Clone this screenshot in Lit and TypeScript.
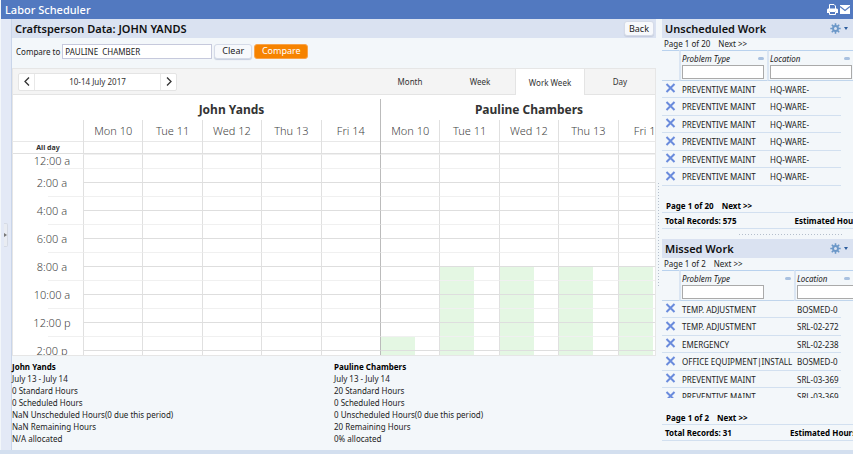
import { LitElement, html, css } from "lit";
import { customElement, property } from "lit/decorators.js";
import { classMap } from "lit/directives/class-map.js";

const DAYS = ["Mon 10", "Tue 11", "Wed 12", "Thu 13", "Fri 14"];
const PEOPLE = ["John Yands", "Pauline Chambers"];
const HOURS = Array.from({ length: 15 }, (_, h) => h);
// First shaded hour for each of the ten day columns; 99 means none.
const FREE_FROM = [99, 99, 99, 99, 99, 13, 8, 8, 8, 8];

const hourLabel = (h: number) => `${h % 12 || 12}:00 ${h < 12 ? "a" : "p"}`;

@customElement("work-panel")
class WorkPanel extends LitElement {
  @property() heading = "";
  @property({ type: Number }) pages = 1;
  @property({ type: Number }) total = 0;
  @property({ attribute: false }) rows: string[][] = [];
  @property({ type: Boolean, reflect: true }) wide = false;

  static styles = css`
    :host { display: block; overflow: hidden; min-width: 0; }
    .title { display: flex; align-items: center; height: 19px; padding: 0 5px 0 3px; background: #dae2f1; }
    h2 { flex: 1; margin: 0; font-size: 11px; line-height: 19px; font-weight: 600; color: #111; white-space: nowrap; }
    button { display: flex; align-items: center; gap: 3px; padding: 0; border: 0; background: none; }
    .pager { display: flex; gap: 8px; height: 12px; padding: 0 2px; line-height: 12px; font-size: 8px; white-space: nowrap; }
    a { color: inherit; text-decoration: none; }
    .scroll { overflow: hidden; max-height: 136px; }
    :host([wide]) .scroll { max-height: 128px; }
    table { width: 100%; table-layout: fixed; border-collapse: separate; border-spacing: 0; font-size: 8px; color: #222; }
    .c-x { width: 17px; }
    .c-type { width: 88px; }
    .c-loc { width: 74px; }
    :host([wide]) .c-type { width: 115px; }
    :host([wide]) .c-loc { width: 47px; }
    th, td { padding: 0; text-align: left; font-weight: 400; white-space: nowrap; box-sizing: border-box; }
    th { height: 31px; border-top: 1px solid #b9d2ee; border-bottom: 1px solid #c0d5ec; vertical-align: top; }
    th + th { border-left: 2px solid #dbe6f3; padding-left: 1px; }
    .label { display: flex; align-items: center; justify-content: space-between; height: 14px; padding-right: 3px; font-style: italic; }
    .label i { width: 6px; height: 3px; border-radius: 2px; background: #a9c1e0; }
    input { display: block; box-sizing: border-box; width: 82px; height: 14px; padding: 0 2px; border: 1px solid #aaa; background: #fff; font-size: 8px; }
    td { height: 17px; border-bottom: 1px solid #d2e0f0; }
    tr:nth-child(even) td { height: 18px; }
    td.end { border-bottom: 0; }
    td + td { padding-left: 3px; }
    td svg { display: block; margin: 0 0 2px 3px; }
    .foot { padding-top: 13px; font-weight: 700; color: #000; font-size: 8px; white-space: nowrap; }
    .foot .pager { height: 13px; line-height: 14px; padding: 0 4px; }
    .totals { display: flex; gap: 58px; height: 15px; padding-left: 3px; line-height: 15px; border: solid #d2e0f0; border-width: 1px 0; }
    .totals span { flex: none; }
  `;

  private pager() {
    return html`<nav class="pager"><span>Page 1 of ${this.pages}</span><a href="#next">Next &gt;&gt;</a></nav>`;
  }

  render() {
    return html`
      <header class="title">
        <h2>${this.heading}</h2>
        <button aria-label="Options">
          <svg width="11" height="11" viewBox="0 0 11 11">
            <g stroke="#6c98c8" stroke-width="1.600">
              <path d="M5.500 .3v10.400M.3 5.500h10.400M1.800 1.800l7.400 7.400M9.200 1.800l-7.400 7.400" />
            </g>
            <circle cx="5.500" cy="5.500" r="3.400" fill="#6c98c8" />
            <circle cx="5.500" cy="5.500" r="1.500" fill="#dae2f1" />
          </svg>
          <svg width="4" height="3" viewBox="0 0 4 3"><path d="M0 0h4L2 3z" fill="#2d5e9e" /></svg>
        </button>
      </header>
      ${this.pager()}
      <div class="scroll">
        <table>
          <colgroup><col class="c-x" /><col class="c-type" /><col class="c-loc" /><col /></colgroup>
          <thead>
            <tr>
              <th></th>
              ${["Problem Type", "Location"].map(
                (name, i) => html`<th colspan=${i + 1}>
                  <div class="label"><span>${name}</span><i></i></div>
                  <input type="text" aria-label=${name} />
                </th>`
              )}
            </tr>
          </thead>
          <tbody>
            ${this.rows.map(
              ([type, place]) => html`<tr>
                <td>
                  <svg width="11" height="10" viewBox="0 0 11 10">
                    <path d="M1.500 1l8 8M9.500 1l-8 8" stroke="#6a8bdc" stroke-width="2" />
                  </svg>
                </td>
                <td>${type}</td>
                <td>${place}</td>
                <td class="end"></td>
              </tr>`
            )}
          </tbody>
        </table>
      </div>
      <footer class="foot">
        ${this.pager()}
        <div class="totals"><span>Total Records: ${this.total}</span><span>Estimated Hours</span></div>
      </footer>
    `;
  }
}

@customElement("work-calendar")
class WorkCalendar extends LitElement {
  static styles = css`
    :host { display: flex; flex-direction: column; min-height: 0; background: #fff; border: 1px solid #e6e6e6; box-sizing: border-box; color: #333; overflow: hidden; }
    .bar { display: flex; flex: none; align-items: stretch; justify-content: space-between; height: 25px; background: #f4f4f4; border-bottom: 1px solid #e4e4e4; }
    button { padding: 0; border: 0; background: none; font: inherit; color: inherit; }
    .range { display: flex; align-self: center; height: 16px; margin-left: 5px; border: 1px solid #e4e4e4; border-radius: 2px; background: #fff; font-size: 8px; }
    .range button { display: grid; place-items: center; width: 15px; }
    .range .date { width: 127px; border: solid #e8e8e8; border-width: 0 1px; line-height: 16px; }
    .tabs { display: flex; height: 25px; font-size: 8px; }
    .tabs button { width: 70px; box-sizing: border-box; }
    .tabs .on { height: 26px; background: #fff; border: solid #e4e4e4; border-width: 0 1px; }
    .sheet { flex: 1; min-height: 0; margin-right: -22px; overflow: hidden; }
    .row { display: grid; grid-template-columns: 70px repeat(10, 1fr); }
    .people { display: grid; grid-template-columns: 70px 1fr 1fr; height: 21px; margin-top: 4px; line-height: 21px; font-size: 12px; font-weight: 700; text-align: center; }
    .people .second, .row .second { border-left: 1px solid #bbb; }
    .days { height: 21px; line-height: 22px; font-size: 11px; font-weight: 300; text-align: center; color: #444; border-bottom: 1px solid #e8e8e8; }
    .cell { border-left: 1px solid #e0e0e0; }
    .allday { height: 11px; border-bottom: 1px solid #e0e0e0; line-height: 12px; font-size: 7px; font-weight: 700; }
    .allday .time { text-align: center; }
    .slot { height: 14px; }
    .slot .time { box-sizing: border-box; text-align: center; padding-left: 8px; font-size: 11px; line-height: 14px; font-weight: 300; color: #444; white-space: nowrap; }
    .slot .time.odd { margin-left: 35px; border-top: 1px solid #f0f0f0; }
    .slot .time span { display: block; margin-top: -6px; }
    .slot:first-child .time span { margin-top: 0; }
    .slot .cell { border-top: 1px solid #dedede; }
    .slot .cell.half { border-top-color: #f0f0f0; }
    .slot:first-child .cell { border-top-color: #f0f0f0; }
    .cell.free { background: linear-gradient(to right, #e4f7e3 58%, transparent 58%); }
  `;

  render() {
    const columns = FREE_FROM.map((_, i) => i);
    return html`
      <div class="bar">
        <div class="range">
          <button aria-label="Previous">
            <svg width="6" height="9" viewBox="0 0 6 9"><path d="M5 .5l-4 4 4 4" fill="none" stroke="#333" stroke-width="1.300" /></svg>
          </button>
          <button class="date">10-14 July 2017</button>
          <button aria-label="Next">
            <svg width="6" height="9" viewBox="0 0 6 9"><path d="M1 .5l4 4-4 4" fill="none" stroke="#333" stroke-width="1.300" /></svg>
          </button>
        </div>
        <div class="tabs">
          ${["Month", "Week", "Work Week", "Day"].map(
            (t) => html`<button class=${classMap({ on: t === "Work Week" })}>${t}</button>`
          )}
        </div>
      </div>
      <div class="sheet">
        <div class="people">
          <span></span>
          ${PEOPLE.map((p, i) => html`<span class=${classMap({ second: i === 1 })}>${p}</span>`)}
        </div>
        <div class="row days">
          <span></span>
          ${columns.map((i) => html`<span class=${classMap({ cell: true, second: i === 5 })}>${DAYS[i % 5]}</span>`)}
        </div>
        <div class="row allday">
          <span class="time">All day</span>
          ${columns.map((i) => html`<span class=${classMap({ cell: true, second: i === 5 })}></span>`)}
        </div>
        <div>
          ${HOURS.map(
            (h) => html`<div class="row slot">
              <div class=${classMap({ time: true, odd: h % 2 === 1 })}>${h % 2 ? "" : html`<span>${hourLabel(h)}</span>`}</div>
              ${columns.map(
                (i) => html`<div
                  class=${classMap({ cell: true, half: h % 2 === 1, second: i === 5, free: h >= FREE_FROM[i] })}
                ></div>`
              )}
            </div>`
          )}
        </div>
      </div>
    `;
  }
}

const SUMMARY = [
  ["John Yands", "July 13 - July 14", "0 Standard Hours", "0 Scheduled Hours", "NaN Unscheduled Hours(0 due this period)", "NaN Remaining Hours", "N/A allocated"],
  ["Pauline Chambers", "July 13 - July 14", "20 Standard Hours", "0 Scheduled Hours", "0 Unscheduled Hours(0 due this period)", "20 Remaining Hours", "0% allocated"],
];

const UNSCHEDULED = Array.from({ length: 6 }, () => ["PREVENTIVE MAINT", "HQ-WARE-"]);
const MISSED = [
  ["TEMP. ADJUSTMENT", "BOSMED-0"],
  ["TEMP. ADJUSTMENT", "SRL-02-272"],
  ["EMERGENCY", "SRL-02-238"],
  ["OFFICE EQUIPMENT|INSTALL", "BOSMED-0"],
  ["PREVENTIVE MAINT", "SRL-03-369"],
  ["PREVENTIVE MAINT", "SRL-03-369"],
];

@customElement("app-root")
class AppRoot extends LitElement {
  static styles = css`
    :host { display: flex; flex-direction: column; box-sizing: border-box; height: 100vh; overflow: hidden; padding-left: 1px; background: #f3f7fa; font-family: "Noto Sans", "Open Sans", sans-serif; font-size: 8px; color: #222; border-bottom: 4px solid #d3dfef; }
    .top { display: flex; flex: none; align-items: center; gap: 2px; height: 19px; padding: 0 3px 0 4px; background: #5279c0; color: #fff; }
    h1 { flex: 1; margin: 0; font-size: 11px; font-weight: 500; line-height: 18px; }
    .top button { display: flex; padding: 0; border: 0; background: none; }
    .body { flex: 1; min-height: 0; display: grid; grid-template-columns: 11px minmax(0, 1fr) 6px 191px; }
    .rail { display: flex; align-items: center; justify-content: flex-end; box-sizing: border-box; background: #e3e9f6; border-right: 1px solid #c9d5ea; }
    .rail button { display: grid; place-items: center; width: 4px; height: 24px; margin-right: 3px; padding: 0; border: 1px solid #d5dae4; border-left: 0; border-radius: 0 2px 2px 0; background: #e9ecf2; box-sizing: border-box; }
    .main { display: flex; flex-direction: column; min-height: 0; }
    .title { display: flex; flex: none; align-items: center; height: 19px; padding: 0 2px 0 3px; background: #dae2f1; }
    h2 { flex: 1; margin: 0; font-size: 11px; font-weight: 600; color: #111; line-height: 19px; }
    .btn { box-sizing: border-box; height: 15px; padding: 0 4px; border: 1px solid #d5dbe8; border-radius: 3px; background: #f7f9fc; box-shadow: 0 1px 1px #c5cddd; font: inherit; font-size: 9px; line-height: 12px; color: #222; }
    .compare { display: flex; flex: none; align-items: center; height: 30px; padding: 0 4px 4px; gap: 2px; box-sizing: border-box; }
    .compare .btn { min-width: 38px; }
    .compare .go { min-width: 54px; background: #f68300; border-color: #f9a34a; color: #fff; box-shadow: none; }
    input { box-sizing: border-box; width: 150px; height: 15px; padding: 0 2px; border: 1px solid #c6c9dc; background: #fff; font: inherit; color: #222; }
    work-calendar { flex: 1; }
    .summary { display: grid; flex: none; grid-template-columns: 1fr 1fr; padding: 5px 0; line-height: 12px; color: #222; }
    .summary p { margin: 0; }
    .summary p:first-child { font-weight: 700; color: #000; }
    .split { align-self: center; justify-self: center; height: 106px; width: 4px; background: radial-gradient(circle, #b5bfcc 1px, transparent 1px) 0 0 / 3px 3px; }
    .side { display: flex; flex-direction: column; min-width: 0; overflow: hidden; }
    .hsplit { flex: none; margin: 4px 10px 2px auto; width: 105px; height: 4px; background: radial-gradient(circle, #b5bfcc 1px, transparent 1px) 0 0 / 3px 3px; }
  `;

  render() {
    return html`
      <header class="top">
        <h1>Labor Scheduler</h1>
        <button aria-label="Print">
          <svg width="11" height="11" viewBox="0 0 11 11">
            <path d="M2.500 5V.500h4.500l1.500 1.500V5" fill="none" stroke="#fff" />
            <path d="M1 4.500h9l1 1V9H9V7H2v2H0V5.500z" fill="#fff" />
            <path d="M2.500 7.500h6v3h-6z" fill="#5279c0" stroke="#fff" />
          </svg>
        </button>
        <button aria-label="Mail">
          <svg width="10" height="9" viewBox="0 0 10 9">
            <path d="M0 0h10v9H0z" fill="#fff" />
            <path d="M0 1.500l5 4 5-4" fill="none" stroke="#5279c0" stroke-width="1.200" />
          </svg>
        </button>
      </header>
      <div class="body">
        <aside class="rail">
          <button aria-label="Expand">
            <svg width="3" height="4" viewBox="0 0 3 4"><path d="M0 0l3 2-3 2z" fill="#777" /></svg>
          </button>
        </aside>
        <main class="main">
          <div class="title">
            <h2>Craftsperson Data: JOHN YANDS</h2>
            <button class="btn">Back</button>
          </div>
          <div class="compare">
            <label for="other">Compare to</label>
            <input id="other" type="text" .value=${"PAULINE  CHAMBER"} />
            <button class="btn">Clear</button>
            <button class="btn go">Compare</button>
          </div>
          <work-calendar></work-calendar>
          <section class="summary">
            ${SUMMARY.map((lines) => html`<div>${lines.map((l) => html`<p>${l}</p>`)}</div>`)}
          </section>
        </main>
        <div class="split"></div>
        <div class="side">
          <work-panel heading="Unscheduled Work" pages="20" total="575" .rows=${UNSCHEDULED}></work-panel>
          <div class="hsplit"></div>
          <work-panel heading="Missed Work" pages="2" total="31" wide .rows=${MISSED}></work-panel>
        </div>
      </div>
    `;
  }
}
